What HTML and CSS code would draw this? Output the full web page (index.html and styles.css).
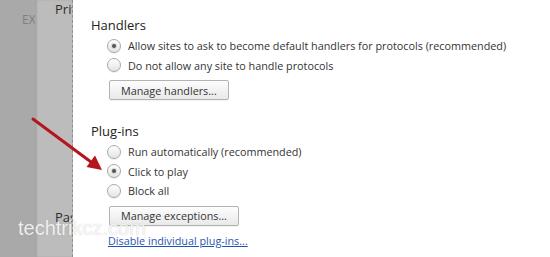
FILE: index.html
```html
<!DOCTYPE html>
<html>
<head>
<meta charset="utf-8">
<link rel="stylesheet" href="styles.css">
</head>
<body>
<div class="screen">
  <div class="sidebar"><span class="ext">EXT</span></div>
  <div class="panel">
    <div class="panel-label">Priv</div>
    <div class="panel-label pas">Pas</div>
  </div>
  <div class="dialog">
    <section class="group">
      <h2 class="heading">Handlers</h2>
      <div class="option"><span class="radio checked"></span><span>Allow sites to ask to become default handlers for protocols (recommended)</span></div>
      <div class="option"><span class="radio"></span><span>Do not allow any site to handle protocols</span></div>
      <button class="btn">Manage handlers...</button>
    </section>
    <section class="group plugins">
      <h2 class="heading">Plug-ins</h2>
      <div class="option"><span class="radio"></span><span>Run automatically (recommended)</span></div>
      <div class="option"><span class="radio checked"></span><span>Click to play</span></div>
      <div class="option"><span class="radio"></span><span>Block all</span></div>
      <button class="btn">Manage exceptions...</button>
      <a class="link" href="#">Disable individual plug-ins...</a>
    </section>
  </div>
  <svg class="arrow" width="550" height="257" viewBox="0 0 550 257">
    <line x1="33" y1="119" x2="91" y2="162" stroke="#b3161b" stroke-width="3" stroke-linecap="round"/>
    <polygon points="102,170 86.5,167 95,155.5" fill="#b3161b"/>
  </svg>
  <div class="watermark">techtrikcz.com</div>
</div>
</body>
</html>
```
FILE: styles.css
```css
html, body {
  margin: 0;
  padding: 0;
}
body {
  width: 550px;
  height: 257px;
  overflow: hidden;
  background: #ffffff;
}
.screen {
  position: relative;
  display: flex;
  width: 550px;
  height: 257px;
  overflow: hidden;
  font-family: "Open Sans", "Noto Sans", sans-serif;
}
.sidebar {
  width: 35px;
  flex: none;
  background: #a9a9a9;
  overflow: hidden;
  box-sizing: border-box;
  padding: 7px 0 0 22px;
  white-space: nowrap;
}
.ext {
  font-size: 12px;
  color: #808080;
}
.panel {
  flex: none;
  background: #bcbcbc;
  box-shadow: inset 2px 0 2px rgba(0,0,0,0.12);
  border-right: 1px dashed #8d8d8d;
  box-sizing: border-box;
  width: 38px;
  padding: 0 0 0 20px;
  overflow: hidden;
  display: flex;
  flex-direction: column;
  white-space: nowrap;
}
.panel-label {
  font-size: 13px;
  line-height: 18px;
  color: #2e2e2e;
}
.panel-label.pas {
  margin-top: auto;
  margin-bottom: 31px;
}
.dialog {
  flex: 1;
  background: #ffffff;
  padding: 16px 0 0 18px;
  color: #333333;
}
.group {
  display: flex;
  flex-direction: column;
  align-items: flex-start;
}
.plugins {
  margin-top: 22px;
}
.heading {
  margin: 0 0 2px 0;
  font-size: 13px;
  font-weight: normal;
  line-height: 18px;
  color: #222222;
}
.option {
  display: flex;
  align-items: center;
  height: 19.5px;
  margin-left: 16px;
  font-size: 10.8px;
  color: #333333;
  white-space: nowrap;
}
.radio {
  width: 12px;
  height: 12px;
  border-radius: 50%;
  border: 1px solid #a9a9a9;
  background: linear-gradient(#ffffff, #e3e3e3);
  margin-right: 7px;
  flex: none;
  display: flex;
  align-items: center;
  justify-content: center;
  box-shadow: 0 1px 1px rgba(0,0,0,0.08);
}
.radio.checked::after {
  content: "";
  width: 4px;
  height: 4px;
  border-radius: 50%;
  background: #555555;
  box-shadow: 0 0 0 1px #d8d8d8;
}
.btn {
  margin: 5px 0 0 18px;
  height: 20px;
  padding: 0 11px;
  font-family: "Open Sans", "Noto Sans", sans-serif;
  font-size: 10.8px;
  color: #333333;
  border: 1px solid #b3b3b3;
  border-radius: 2px;
  background: linear-gradient(#fdfdfd, #e9e9e9);
  box-shadow: 0 1px 1px rgba(0,0,0,0.06);
}
.link {
  margin: 7px 0 0 17px;
  font-size: 10.8px;
  line-height: 16px;
  color: #1f55b0;
  text-decoration: underline;
}
.arrow {
  position: absolute;
  left: 0;
  top: 0;
  pointer-events: none;
}
.watermark {
  position: absolute;
  left: 18px;
  top: 218px;
  font-family: "Liberation Sans", Arial, sans-serif;
  font-size: 20px;
  line-height: 20px;
  color: rgba(255,255,255,0.85);
  text-shadow: 0 0 1px rgba(110,110,110,0.4);
  pointer-events: none;
}
```
